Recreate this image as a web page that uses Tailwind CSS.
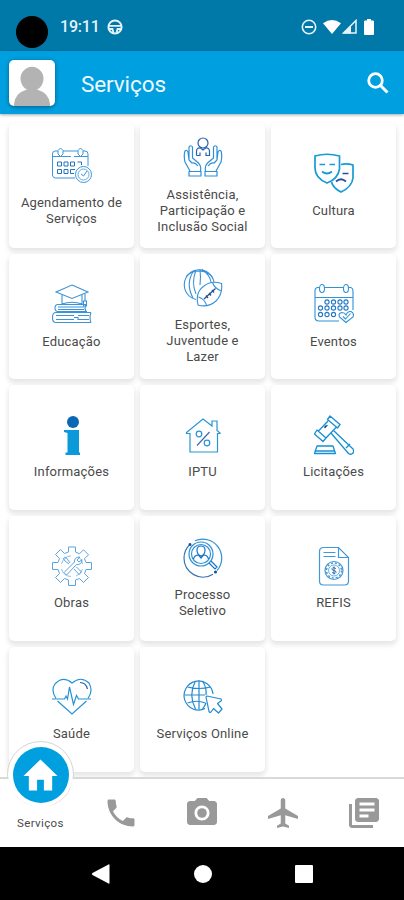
<!DOCTYPE html>
<html lang="pt-BR">
<head>
    <meta charset="UTF-8">
    <meta name="viewport" content="width=device-width, initial-scale=1.0">
    <title>Serviços</title>
    <script src="https://cdn.jsdelivr.net/npm/@tailwindcss/browser@4"></script>
</head>
<body class="h-[900px] w-[404px] overflow-hidden bg-white font-['Roboto',sans-serif] flex flex-col">
    <!-- Status bar -->
    <div class="h-[51px] shrink-0 bg-[#0078a8] flex items-center pl-4 pr-[30px] text-white">
        <div class="size-8 rounded-full bg-black mt-3"></div>
        <span class="ml-3 mt-0.5 text-[16px] leading-5 font-medium tracking-[-0.2px] text-[#e6f3fa]">19:11</span>
        <svg class="ml-[7px] mt-0.5 size-4" viewBox="0 0 16 16" fill="none" stroke="#e6f3fa" stroke-width="2">
            <circle cx="8" cy="8" r="6.6"/>
            <path d="M2 6.800H14M2 10h3.500l1 4M14 10h-3.500l-1 4" stroke-width="1.800"/>
        </svg>
        <div class="ml-auto mt-0.5 flex items-center">
            <svg class="size-4" viewBox="0 0 16 16" fill="none" stroke="#e6f3fa" stroke-width="1.6">
                <circle cx="8" cy="8" r="6.7"/>
                <path d="M4 8h8" stroke-width="2"/>
            </svg>
            <svg class="ml-[6px] h-[14px] w-[18px]" viewBox="0 0 18 14" fill="#fff"><path d="M0 3.2Q9-3 18 3.2L9 14z"/></svg>
            <svg class="ml-px h-[15px] w-[15px]" viewBox="0 0 15 15">
                <path d="M1.5 14 14 1.5V14z" fill="none" stroke="#e6f3fa" stroke-width="1.5"/>
                <path d="M1 14.5 9 6.5v8z" fill="#e6f3fa"/>
            </svg>
            <svg class="ml-[7px] h-4 w-[10px]" viewBox="0 0 10 16" fill="#fff"><path d="M3 0h4v1.6h2q1 0 1 1V15q0 1-1 1H1q-1 0-1-1V2.6q0-1 1-1h2z"/></svg>
        </div>
    </div>

    <!-- Header -->
    <header class="relative z-10 h-[63px] shrink-0 bg-[#009fe0] shadow-[0_1px_3px_rgba(0,0,0,0.35)] flex items-center pl-[9px] pr-[14px]">
        <div class="size-[46px] rounded-[5px] bg-white overflow-hidden shadow-[0_1px_4px_rgba(0,0,0,0.4)]">
            <svg class="size-[46px]" viewBox="0 0 46 46" fill="#b3b3b3">
                <path d="M5 46V44Q6 33 18 29.500A11.500 12 0 1 1 28 29.500Q40 33 41 44V46z"/>
            </svg>
        </div>
        <h1 class="ml-[26px] text-[22.500px] leading-none text-[#eef8fd] mt-1 tracking-[-0.1px]">Serviços</h1>
        <svg class="ml-auto size-[24px]" viewBox="0 0 24 24" fill="none" stroke="#fff">
            <circle cx="9.500" cy="9.500" r="6.800" stroke-width="2.800"/>
            <path d="M14.500 14.500 21.500 21.500" stroke-width="3"/>
        </svg>
    </header>

    <!-- Cards -->
    <main class="h-[663px] shrink-0 overflow-hidden pt-[9px] pl-[9px] text-[#4a4a4a] text-[13px] leading-4 tracking-[0.18px] text-center">
        <div class="grid grid-cols-[125px_125px_125px] auto-rows-[125px] gap-1.5">
            <div class="rounded-[5px] bg-white shadow-[0_3px_5px_1px_rgba(0,0,0,0.1)] flex flex-col items-center justify-center gap-[9px]">
                <svg class="size-10" viewBox="0 0 40 40" fill="none" stroke="#3b97db">
                    <path d="M6 6H3Q.5 6 .5 9v21q0 3 3 3H23M36 21V9q0-3-3-3H31M26 6H11M.5 11.500H19M22 11.500H36"/>
                    <path d="M8.500 3 11 5.500V9L8.500 11.500 6 9V5.500zM28.500 3 31 5.500V9L28.500 11.500 26 9V5.500z"/>
                    <path d="M5.500 17h4v4h-4zM12 17h4v4h-4zM18.500 17h4v4h-4zM25.500 17h4v3M5.500 24.500h4v4h-4zM12 24.500h4v4h-4zM22 28.500h-3.500v-4H23" stroke="#2474bd"/>
                    <circle cx="31.500" cy="29.500" r="8"/>
                    <circle cx="31.500" cy="29.500" r="5.500" stroke-width=".8"/>
                    <path d="M29 29l2.500 2 3.500-5"/>
                </svg>
                <p class="relative top-px">Agendamento de<br>Serviços</p>
            </div>
            <div class="rounded-[5px] bg-white shadow-[0_3px_5px_1px_rgba(0,0,0,0.1)] flex flex-col items-center justify-center gap-[9px]">
                <svg class="size-10" viewBox="0 0 40 40" fill="none" stroke="#2f8fd6" stroke-width="1.200">
                    <circle cx="20" cy="6" r="5" stroke="#2862b0"/>
                    <path d="M13.500 18.500v-4q0-4 4-3.500l2.500 2 2.500-2q4-.5 4 3.500v4h-3.500v-3M13.500 18.500h3.500v-3" stroke="#2862b0"/>
                    <path d="M7 34 2 25Q.5 18 2 14q2-1.500 3 1l1 8V10q2-2.500 3.500 0v11l6 5q3 3 2 8M6 23l3 3q3-1 6 3M6 34.500h12V39H6z"/>
                    <path d="M33 34 38 25Q39.500 18 38 14q-2-1.500-3 1l-1 8V10q-2-2.500-3.500 0v11l-6 5q-3 3-2 8M34 23l-3 3q-3-1-6 3M34 34.500H22V39H34z"/>
                </svg>
                <p class="relative top-px">Assistência,<br>Participação e<br>Inclusão Social</p>
            </div>
            <div class="rounded-[5px] bg-white shadow-[0_3px_5px_1px_rgba(0,0,0,0.1)] flex flex-col items-center justify-center gap-[9px]">
                <svg class="size-10" viewBox="0 0 40 40" fill="none" stroke="#169bd5" stroke-width="1.700">
                    <path d="M1 3Q13-.5 25.500 3v13Q24 26 13 30 1 25 1 15z"/>
                    <path d="M27 11.500Q33 10 39 12v13Q38 34 27 39 19 35 17.500 29" />
                    <path d="M5.500 11.500H11M15.500 11.500H21M8 18.500q5 4 10 0"/>
                    <path d="M28.500 20.500h6M22 28.500q5-4.500 10 0" stroke="#274fa3"/>
                </svg>
                <p class="relative top-px">Cultura</p>
            </div>

            <div class="rounded-[5px] bg-white shadow-[0_3px_5px_1px_rgba(0,0,0,0.1)] flex flex-col items-center justify-center gap-[9px]">
                <svg class="size-10" viewBox="0 0 40 40" fill="none" stroke="#3c93d5" stroke-width="1.100">
                    <path d="M20 1 36 8 20 14.500 4 8zM10 11v9M30 11v9M10 20q10-3.500 20 0M33 9v8M31.500 17h3v5h-3z"/>
                    <path d="M34 20.500H6q-3 0-3 3.500t3 3.500H35M34 20.500q-2 3.500 0 7M6 23H32M6 25.500H32" />
                    <path d="M39 28.500H4Q.5 28.500.5 33.500T4 38.500H39M39 28.500q-2 5 0 10M4 31.500H22M4 35.500H22M26 31.500H37M22 33.500h4v2H37"/>
                </svg>
                <p class="relative top-px">Educação</p>
            </div>
            <div class="rounded-[5px] bg-white shadow-[0_3px_5px_1px_rgba(0,0,0,0.1)] flex flex-col items-center justify-center gap-[9px]">
                <svg class="size-10" viewBox="0 0 40 40" fill="none" stroke="#3891d4" stroke-width="1.100">
                    <path d="M13 31.500A15 15 0 1 1 31 14"/>
                    <path d="M11 2.500Q2 15 10 30M13 2Q8 15 13 26M17 1.500Q18 9 17 17M19 1.500Q27 7 28 14M3 8.500Q8 3 17 3 26 4 29 9"/>
                    <path d="M15 37Q12 24 21 18 28 12 38.500 15.500 40 26 33 33 25 40 15 37zM15.500 29q6 2 8 8M29.500 14.500q2 6 9 8.500"/>
                    <path d="M21 31 32.500 20.500M23 27.500l2 2.500M26 25l2 2.500M29 22l2 2.500" stroke="#244f91" stroke-width="1.300"/>
                </svg>
                <p>Esportes,<br>Juventude e<br>Lazer</p>
            </div>
            <div class="rounded-[5px] bg-white shadow-[0_3px_5px_1px_rgba(0,0,0,0.1)] flex flex-col items-center justify-center gap-[9px]">
                <svg class="size-10" viewBox="0 0 40 40" fill="none" stroke="#2f92d6" stroke-width="1.100">
                    <path d="M5.500 3.500H4Q1 3.500 1 7V33q0 4 4 4H25M10.500 3.500h19M34.500 3.500H36q3 0 3 4V26M1 13.500H39" />
                    <ellipse cx="8" cy="4.500" rx="2.500" ry="4"/>
                    <ellipse cx="32" cy="4.500" rx="2.500" ry="4"/>
                    <g stroke="#2478c4">
                        <circle cx="13" cy="18" r="2.100"/><circle cx="19.500" cy="18" r="2.100"/><circle cx="26" cy="18" r="2.100"/><circle cx="32" cy="18" r="2.100"/>
                        <circle cx="6.500" cy="24" r="2.100"/><circle cx="13" cy="24" r="2.100"/><circle cx="19.500" cy="24" r="2.100"/><circle cx="26" cy="24" r="2.100"/><circle cx="32" cy="24" r="2.100"/>
                        <circle cx="6.500" cy="30.500" r="2.100"/><circle cx="13" cy="30.500" r="2.100"/><circle cx="19.500" cy="30.500" r="2.100"/>
                    </g>
                    <path d="M32 38.500 25.500 33Q24 29 28 28.500q2.500 0 4 2.500 1.500-4 5-3.500 3.500 1.500 2 5.500zM29 32.500l2.500 2.500 5-5.500"/>
                </svg>
                <p class="relative top-px">Eventos</p>
            </div>

            <div class="rounded-[5px] bg-white shadow-[0_3px_5px_1px_rgba(0,0,0,0.1)] flex flex-col items-center justify-center gap-[9px]">
                <svg class="size-10" viewBox="0 0 40 40">
                    <circle cx="21" cy="7" r="6" fill="#0868b5"/>
                    <path d="M12 15H27V37.500h1V40H13.500V37.500H15.500V18L12 17z" fill="#0b9ad9"/>
                </svg>
                <p>Informações</p>
            </div>
            <div class="rounded-[5px] bg-white shadow-[0_3px_5px_1px_rgba(0,0,0,0.1)] flex flex-col items-center justify-center gap-[9px]">
                <svg class="size-10" viewBox="0 0 40 40" fill="none" stroke="#2894d8" stroke-width="1.200">
                    <path d="M7 18.500H3.500V17.500L20 4 29 11V6h5v9.500l3 2.500v.5H34.500V37H7z"/>
                    <circle cx="16" cy="19" r="2.800"/>
                    <circle cx="24" cy="28" r="2.800"/>
                    <path d="M26.500 17 14 30.500" stroke="#4468aa"/>
                </svg>
                <p>IPTU</p>
            </div>
            <div class="rounded-[5px] bg-white shadow-[0_3px_5px_1px_rgba(0,0,0,0.1)] flex flex-col items-center justify-center gap-[9px]">
                <svg class="size-10" viewBox="0 0 40 40" fill="none" stroke="#168fd4" stroke-width="1.300" stroke-linejoin="round">
                    <path d="M16 1 26 9.500 23.500 13 13.500 4.500zM3 15 12 23 9 26.500.5 19zM14 6 4.500 16M22 12.500 12 23"/>
                    <path d="M19.500 15.500 39 34q1.500 3-.5 4.500t-4 0L17 18M32 33l4-4"/>
                    <path d="M3 31H19l2.500 7.500H.5zM.5 36H21M10.500 13l3-3"/>
                    <path d="M10.500 12.500l2-2" stroke="#173c78"/>
                </svg>
                <p>Licitações</p>
            </div>

            <div class="rounded-[5px] bg-white shadow-[0_3px_5px_1px_rgba(0,0,0,0.1)] flex flex-col items-center justify-center gap-[9px]">
                <svg class="size-10" viewBox="0 0 40 40" fill="none" stroke="#5ba4dd">
                    <path d="M16.500 6V1h7v5l4 1.800 4-4 5 5-4 4L34 16.500h5.500v7H34l-1.500 4 4 4-5 5-4-4-4 1.500v5.500h-7V34l-4-1.500-4 4-5-5 4-4L6 23.500H.5v-7H6l1.500-4-4-4 5-5 4 4z"/>
                    <path d="M19 9.800A10.500 10.500 0 0 0 9.500 18M9.500 23A10.500 10.500 0 0 0 19 30.500M24 30A10.500 10.500 0 0 0 30.500 23M30.500 18Q30 13 26.500 11" stroke-width=".7"/>
                    <path d="M12 26.500 22.500 16Q22 11 28 11l-3 3 2 2 3-2.500q0 5.500-5.500 5L14.500 29zM12 11l3 1.500 3 4.500M11 12l2 3 4 3M22 23l5 5.500 2.500-2.500-5-5"/>
                </svg>
                <p>Obras</p>
            </div>
            <div class="rounded-[5px] bg-white shadow-[0_3px_5px_1px_rgba(0,0,0,0.1)] flex flex-col items-center justify-center gap-[9px]">
                <svg class="size-10" viewBox="0 0 40 40" fill="none" stroke="#2f91d6" stroke-width="1.200">
                    <path d="M12 2.800A19 19 0 0 1 34 32.700"/>
                    <path d="M6 7.300A19 19 0 0 0 1 20A19 19 0 0 0 30 36.200" stroke="#3475b8"/>
                    <circle cx="7" cy="6.500" r=".9" fill="#174f96" stroke="#174f96"/>
                    <circle cx="32.500" cy="34" r=".9" fill="#174f96" stroke="#174f96"/>
                    <circle cx="18" cy="16" r="12"/>
                    <circle cx="18" cy="16" r="9.500"/>
                    <path d="M14 12q0-4 4-4t4 4q0 5-4 6-4-1-4-6zM10.500 21q1-4 5-4l2.500 3 2.500-3q4 0 5 4M26 25l6 6 2-2-6-6" stroke="#1676c7"/>
                </svg>
                <p>Processo<br>Seletivo</p>
            </div>
            <div class="rounded-[5px] bg-white shadow-[0_3px_5px_1px_rgba(0,0,0,0.1)] flex flex-col items-center justify-center gap-[9px]">
                <svg class="size-10" viewBox="0 0 40 40" fill="none" stroke="#4398d9" stroke-width="1.200">
                    <path d="M24.500 1.500H9.500q-4 0-4 4v29.500q0 4 4 4h21q4 0 4-4V11.500zM24.500 1.500v10h10M9.500 6.500h12M9.500 10.500h12"/>
                    <circle cx="20" cy="24.500" r="9"/>
                    <circle cx="20" cy="24.500" r="7.500" stroke-width="1.500" stroke-dasharray="2 2"/>
                    <circle cx="20" cy="24.500" r="5.500" stroke-width=".8"/>
                    <path d="M22 22.500q-4-2-4 0t2 2 2 2-4 0M20 20.500v8" stroke="#2f6bb0" stroke-width="1"/>
                </svg>
                <p>REFIS</p>
            </div>

            <div class="rounded-[5px] bg-white shadow-[0_3px_5px_1px_rgba(0,0,0,0.1)] flex flex-col items-center justify-center gap-[9px]">
                <svg class="size-10" viewBox="0 0 40 40" fill="none" stroke="#2593d7" stroke-width="1.200">
                    <path d="M4 21.500Q-1.500 13 3 7 11-1.500 20 6 29-1.500 37 6 41.500 14 36 21.500M5.500 24 20 37 34.500 24"/>
                    <path d="M0 22H12.500l1.500-3 1.500 3 2-12 4 17.500 3-9 2 3.500H39"/>
                    <path d="M28 5.500q6 0 7.500 6.500" stroke="#31579f"/>
                </svg>
                <p>Saúde</p>
            </div>
            <div class="rounded-[5px] bg-white shadow-[0_3px_5px_1px_rgba(0,0,0,0.1)] flex flex-col items-center justify-center gap-[9px]">
                <svg class="size-10" viewBox="0 0 40 40" fill="none" stroke="#248bd2" stroke-width="1.200">
                    <path d="M22 31.500A14.500 14.500 0 1 1 30 17"/>
                    <path d="M16 3.500V32.500M1.500 18H22M4.500 10q11.500 3 23 0M4.500 26q9-3.500 18 0M12.500 4Q5 18 12.500 32M19.500 4Q24 11 23 18M23 26Q22 29 19.500 32"/>
                    <path d="M23 20q0-1 1-1L38 22q1 1 0 2l-3.500 2.500 4.500 5.500-3.500 4-5-4.500L28 35q-1.500 1-2-.5z" stroke-linejoin="round"/>
                </svg>
                <p>Serviços Online</p>
            </div>
        </div>
    </main>

    <!-- Bottom navigation -->
    <nav class="relative h-[70px] shrink-0 bg-white border-t-2 border-[#d9d9d9] grid grid-cols-5 items-center justify-items-center">
        <div class="relative self-stretch w-full">
            <!-- Active item rises above the bar -->
            <div class="absolute left-[7px] -top-[38px] size-[67px] rounded-full border border-[#d5d5d5] bg-white flex items-center justify-center">
                <div class="size-[56px] rounded-full bg-[#009fe0] flex items-center justify-center">
                    <svg class="h-[32px] w-[35px]" viewBox="0 0 36 32" fill="#fff"><path d="M18 0 35.500 17H30V32H21.500V21H14.500V32H6V17H.500z"/></svg>
                </div>
            </div>
            <!-- Covers the lower half of the ring -->
            <div class="absolute left-[6px] top-0 h-[31px] w-[70px] rounded-b-full border-b-4 border-x-4 border-white"></div>
            <span class="absolute inset-x-0 top-[36px] text-center text-[11.500px] leading-4 tracking-[0.35px] text-[#4a4a4a]">Serviços</span>
        </div>
        <svg class="size-9" viewBox="0 0 24 24" fill="#999"><path d="M6.620 10.790c1.440 2.830 3.760 5.140 6.590 6.590l2.200-2.200c.27-.27.67-.36 1.020-.24 1.120.37 2.330.57 3.570.57.55 0 1 .45 1 1V20c0 .55-.45 1-1 1-9.390 0-17-7.610-17-17 0-.55.45-1 1-1h3.500c.55 0 1 .45 1 1 0 1.250.2 2.450.57 3.570.11.35.03.74-.25 1.020l-2.200 2.200z"/></svg>
        <svg class="size-9" viewBox="0 0 24 24" fill="#999"><circle cx="12" cy="12" r="3.200"/><path d="M9 2 7.170 4H4c-1.100 0-2 .9-2 2v12c0 1.100.9 2 2 2h16c1.100 0 2-.9 2-2V6c0-1.100-.9-2-2-2h-3.170L15 2H9zm3 15c-2.760 0-5-2.240-5-5s2.240-5 5-5 5 2.240 5 5-2.240 5-5 5z"/></svg>
        <svg class="size-9" viewBox="0 0 24 24" fill="#999"><path d="M22 16v-2l-8.500-5V3.500c0-.83-.67-1.500-1.500-1.500s-1.500.67-1.500 1.500V9L2 14v2l8.500-2.500V19L8 20.500V22l4-1 4 1v-1.500L13.500 19v-5.500L22 16z"/></svg>
        <svg class="size-9" viewBox="0 0 24 24" fill="#999"><path d="M4 6H2v14c0 1.100.9 2 2 2h14v-2H4V6zm16-4H8c-1.100 0-2 .9-2 2v12c0 1.100.9 2 2 2h12c1.100 0 2-.9 2-2V4c0-1.100-.9-2-2-2zm-1 9H9V9h10v2zm-4 4H9v-2h6v2zm4-8H9V5h10v2z"/></svg>
    </nav>

    <!-- System buttons -->
    <div class="h-[53px] shrink-0 bg-black flex items-center justify-center">
        <svg class="size-5" viewBox="0 0 20 20" fill="#fff"><path d="M18.500 1v18q0 1-1 .6L1.500 11q-1.500-1 0-2L17.500.4q1-.4 1 .6z"/></svg>
        <div class="size-[18px] rounded-full bg-white mx-[83px]"></div>
        <div class="size-[18px] rounded-[1px] bg-white"></div>
    </div>
</body>
</html>
